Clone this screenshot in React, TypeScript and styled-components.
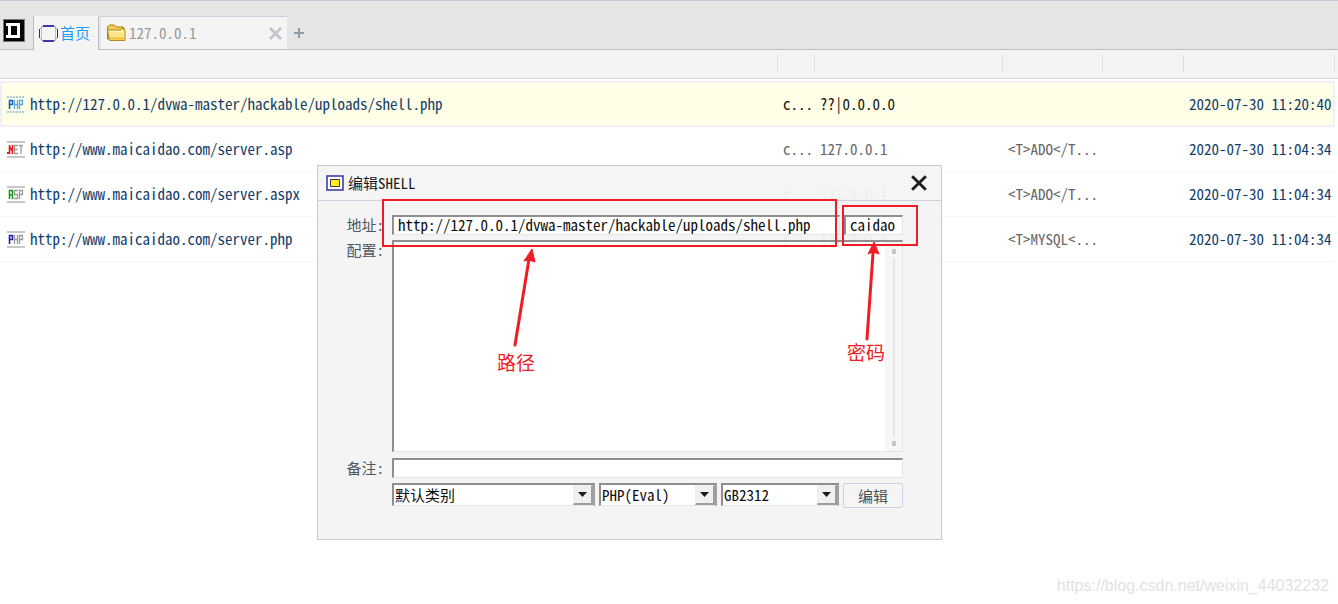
import React from 'react';
import styled, { createGlobalStyle, css } from 'styled-components';

const mono = '"Noto Sans Mono CJK SC", "Liberation Mono", "Noto Sans CJK SC", monospace';
const sans = '"Noto Sans CJK SC", "Liberation Sans", sans-serif';
const red = '#ee1c25';

const GlobalStyle = createGlobalStyle`
  * { box-sizing: border-box; }
  html, body, #root { height: 100%; }
  body {
    margin: 0;
    background: #fff;
    color: #222;
    font-family: ${mono};
    font-size: 15px;
    line-height: 20px;
  }
  button, input, select, textarea { font: inherit; color: inherit; }
`;

const Page = styled.div`
  position: relative;
  display: flex;
  flex-direction: column;
  min-height: 100%;
  overflow: hidden;
`;

const TabBar = styled.nav`
  display: flex;
  align-items: flex-end;
  height: 50px;
  background: #e5e5e5;
  border-top: 1px solid #c9c7d4;
  box-shadow: inset 0 -1px 0 #bebccb;
`;

const Logo = styled.div`
  align-self: flex-start;
  display: flex;
  width: 33px;
  padding: 18px 0 0 3px;
`;

const Tab = styled.button<{ $active?: boolean }>`
  display: flex;
  align-items: center;
  gap: ${p => (p.$active ? 2 : 3)}px;
  height: ${p => (p.$active ? 34 : 33)}px;
  padding: 0 5px;
  border: 0;
  background: #f4f4f4;
  text-align: left;
  white-space: nowrap;
  ${p =>
    p.$active
      ? css`
          padding-right: 8px;
          border-left: 1px solid #bebccb;
          border-right: 1px solid #bebccb;
          color: #1e9bff;
          font-family: ${sans};
          font-size: 15px;
        `
      : css`
          width: 186px;
          margin: 0 0 1px 2px;
          border-top: 1px solid #d0cfd9;
          color: #999;
        `}
`;

const TabName = styled.span`
  flex: 1;
`;

const AddTab = styled.button`
  align-self: flex-end;
  display: flex;
  padding: 0;
  margin: 0 0 11px 6px;
  border: 0;
  background: none;
`;

const ListTable = styled.table`
  width: 100%;
  table-layout: fixed;
  border-collapse: separate;
  border-spacing: 0;
`;

const HeadCell = styled.th`
  height: 29px;
  padding: 5px 0 6px;
  background: #f4f4f4;
  border-bottom: 1px solid #d5d5d8;
`;

const HeadRule = styled.div<{ $last?: boolean }>`
  height: 17px;
  border-right: ${p => (p.$last ? 0 : 1)}px solid #dedede;
`;

const Row = styled.tr<{ $selected?: boolean }>`
  td {
    height: ${p => (p.$selected ? 46 : 45)}px;
    padding: 0 0 0 5px;
    border-bottom: 1px solid #f7f7f9;
    color: ${p => (p.$selected ? '#111' : '#666')};
    white-space: nowrap;
    overflow: hidden;
  }
  td:first-child { padding-left: 7px; }
  td:last-child { padding: 0; border: 0; background: #fff; }
  ${p =>
    p.$selected &&
    css`
      td {
        background: #ffffe8;
        border-top: 2px solid #efeff8;
        border-bottom: 2px solid #efeff8;
      }
      td:first-child { border-left: 2px solid #efeff8; padding-left: 5px; }
      td:nth-last-child(2) { border-right: 2px solid #efeff8; }
    `}
  td:first-child, td:nth-last-child(2) { color: #123c69; }
`;

const Spacer = styled.tr`
  td { height: 2px; padding: 0; }
`;

const Site = styled.div`
  display: flex;
  align-items: center;
  gap: 5px;
`;

const Dialog = styled.section`
  position: absolute;
  left: 317px;
  top: 165px;
  width: 625px;
`;

const Frame = styled.div`
  height: 375px;
  border: 1px solid #c6c5d0;
  background: #f4f4f4;
  opacity: 0.95;
`;

const TitleBar = styled.header`
  display: flex;
  align-items: center;
  gap: 4px;
  height: 35px;
  padding: 0 14px 0 8px;
  border-bottom: 1px solid #cccbd6;
  background: #f5f5f5;
  color: #111;
`;

const Title = styled.h1`
  flex: 1;
  margin: 0;
  font: inherit;
`;

const IconButton = styled.button`
  display: flex;
  padding: 0;
  border: 0;
  background: none;
`;

const Form = styled.form`
  display: grid;
  grid-template-columns: 66px 511px;
  column-gap: 8px;
  row-gap: 5px;
  padding-top: 14px;
  color: #000;
`;

const Label = styled.label`
  color: #44505c;
  text-align: right;
  white-space: nowrap;
`;

const Line = styled.div`
  display: flex;
  gap: 4px;
`;

const sunken = css`
  border: 1px solid #e4e4e4;
  border-top: 2px solid #8a8a8a;
  border-left: 2px solid #8a8a8a;
  border-radius: 0;
  background: #fff;
  outline: 0;
`;

const Field = styled.input<{ $width?: number }>`
  ${sunken}
  width: ${p => (p.$width ? `${p.$width}px` : '100%')};
  height: 20px;
  padding: 0 4px 2px;
`;

const Memo = styled.div`
  ${sunken}
  display: flex;
  height: 212px;
  margin-bottom: 1px;
`;

const MemoText = styled.textarea`
  flex: 1;
  border: 0;
  padding: 2px 4px;
  background: none;
  resize: none;
  outline: 0;
`;

const Track = styled.div`
  display: flex;
  flex-direction: column;
  align-items: center;
  gap: 4px;
  width: 17px;
  padding: 7px 0 5px;
  background: repeating-conic-gradient(#f2f2f2 0 25%, #fafafa 0 50%) 0 0 / 2px 2px;

  &::before, &::after {
    content: '';
    width: 4px;
    height: 5px;
    background: #c4c4c4;
  }
`;

const TrackLine = styled.div`
  flex: 1;
  width: 2px;
  background: #e4e4e4;
`;

const Picker = styled.div<{ $width: number }>`
  ${sunken}
  position: relative;
  width: ${p => p.$width}px;
  height: 23px;
  border-right: 2px solid #9a9a9a;

  select {
    display: block;
    width: 100%;
    height: 20px;
    padding: 0 0 1px 1px;
    border: 0;
    outline: 0;
    background: none;
    appearance: none;
  }
`;

const Arrow = styled.span`
  position: absolute;
  top: 0;
  right: 0;
  display: flex;
  align-items: center;
  justify-content: center;
  width: 20px;
  height: 20px;
  border: 1px solid #eee;
  border-right: 2px solid #999;
  border-bottom: 2px solid #999;
  background: #f0f0f0;
  pointer-events: none;
`;

const Submit = styled.button`
  width: 60px;
  height: 25px;
  padding: 0;
  border: 1px solid #cfcfda;
  border-radius: 2px;
  background: #f5f5f5;
  color: #3c4650;
`;

const Marks = styled.svg`
  position: absolute;
  left: 0;
  top: 0;
  pointer-events: none;
`;

const Note = styled.span<{ $x: number; $y: number }>`
  position: absolute;
  left: ${p => p.$x}px;
  top: ${p => p.$y}px;
  color: ${red};
  font-family: ${sans};
  font-size: 19px;
`;

const Credit = styled.footer`
  margin-top: auto;
  padding: 0 9px 8px;
  color: #e2e2e2;
  font-family: "Liberation Sans", sans-serif;
  font-size: 16px;
  text-align: right;
`;

const LogoIcon = () => (
  <svg width="22" height="23" viewBox="0 0 22 23">
    <path d="M0 0h22v23H0z" fill="#777" />
    <path d="M1 1h20v21H1z" fill="#000" />
    <path d="M3 4h14v15H3v-3h2V7H3z" fill="#fff" />
    <path d="M8 7h6v9H8z" fill="#000" />
  </svg>
);

const HomeIcon = () => (
  <svg width="19" height="17" viewBox="0 0 19 17">
    <path d="M2.500 1.500h14v14h-14z" fill="none" stroke="#a8a8ac" strokeDasharray="2 1" />
    <path d="M4 1h11M4 16h11" stroke="#3a3aa4" strokeWidth="2" />
    <path d="M.5 4v9M18.500 4v9" stroke="#2a2a9c" />
    <path d="M1 4 4 1M15 1l3 3M1 13l3 3M18 13l-3 3" stroke="#9a9ac8" />
  </svg>
);

const FolderIcon = () => (
  <svg width="20" height="18" viewBox="0 0 20 18">
    <path d="M1.500 15V3l2-2h5l2 2h6.500l1.500 2v10z" fill="#f3cf58" stroke="#a77b12" />
    <path d="M3.500 16.500 1.500 6h13l1-1.500h2L19 7v9.500z" fill="#ffe688" stroke="#b58a1c" />
    <path d="M4 13.500h14v2H4.500z" fill="#f0bd35" />
    <path d="M3.500 7.500h13" stroke="#fff8cc" />
  </svg>
);

const glyphs: Record<string, string> = {
  P: 'M.5 9V.5h3v4h-3',
  H: 'M.5 0v9M3.500 0v9M.5 4.500h3',
  N: 'M.5 9V0M3.500 0v9M1 2l2 4',
  E: 'M4 .5H.5v8H4M.5 4.500h3',
  T: 'M0 .5h4M2 1v8',
  A: 'M.5 9V.5h3V9M.5 5h3',
  S: 'M4 .5H.5v4h3v4H0',
};

type Kind = { word: string; first: string; rest: string; line: string; dash?: boolean };

const kinds: Record<string, Kind> = {
  phpOn: { word: 'PHP', first: '#1462b8', rest: '#58a7dc', line: '#4b9bc8', dash: true },
  net: { word: 'NET', first: '#f01818', rest: '#999', line: '#c8c8c8' },
  asp: { word: 'ASP', first: '#1d971d', rest: '#999', line: '#c8c8c8' },
  php: { word: 'PHP', first: '#2020a0', rest: '#999', line: '#c8c8c8' },
};

const KindIcon = ({ kind }: { kind: Kind }) => (
  <svg width="18" height="17" viewBox="0 0 18 17">
    <path d="M0 1h18M0 16h18" stroke={kind.line} strokeWidth={kind.dash ? 1 : 2} strokeDasharray={kind.dash ? '2 1' : undefined} />
    {kind.word === 'NET' && <path d="M0 12h2" stroke={kind.first} strokeWidth="2" />}
    {kind.word.split('').map((letter, i) => (
      <path
        key={i}
        d={glyphs[letter]}
        transform={`translate(${2 + i * 5} 4)`}
        fill="none"
        stroke={i === 0 ? kind.first : kind.rest}
        strokeWidth={i === 0 ? 1.6 : 1.3}
      />
    ))}
  </svg>
);

const WindowIcon = () => (
  <svg width="18" height="16" viewBox="0 0 18 16">
    <path d="M1 1h16v14H1z" fill="#fff" stroke="#2929a3" strokeWidth="1.500" />
    <path d="M4.500 4.500h9v7h-9z" fill="#ffee00" stroke="#2b2b55" />
  </svg>
);

const Cross = ({ size, color, weight }: { size: number; color: string; weight: number }) => (
  <svg width={size} height={size} viewBox="0 0 14 14">
    <path d="M1 1l12 12M13 1L1 13" stroke={color} strokeWidth={weight} />
  </svg>
);

const rows = [
  { kind: 'phpOn', url: 'http://127.0.0.1/dvwa-master/hackable/uploads/shell.php', ip: '??|0.0.0.0', config: '', time: '2020-07-30 11:20:40' },
  { kind: 'net', url: 'http://www.maicaidao.com/server.asp', ip: '127.0.0.1', config: '<T>ADO</T...', time: '2020-07-30 11:04:34' },
  { kind: 'asp', url: 'http://www.maicaidao.com/server.aspx', ip: '127.0.0.1', config: '<T>ADO</T...', time: '2020-07-30 11:04:34' },
  { kind: 'php', url: 'http://www.maicaidao.com/server.php', ip: '127.0.0.1', config: '<T>MYSQL<...', time: '2020-07-30 11:04:34' },
];

const Select = ({ name, value, width }: { name: string; value: string; width: number }) => (
  <Picker $width={width}>
    <select aria-label={name} defaultValue={value}>
      <option>{value}</option>
    </select>
    <Arrow>
      <svg width="9" height="5" viewBox="0 0 9 5">
        <path d="M0 0h9L4.500 5z" fill="#111" />
      </svg>
    </Arrow>
  </Picker>
);

export default function App() {
  return (
    <Page>
      <GlobalStyle />
      <TabBar>
        <Logo><LogoIcon /></Logo>
        <Tab $active><HomeIcon />首页</Tab>
        <Tab>
          <FolderIcon />
          <TabName>127.0.0.1</TabName>
          <Cross size={13} color="#c3c2ce" weight={3} />
        </Tab>
        <AddTab aria-label="+">
          <svg width="12" height="12" viewBox="0 0 12 12">
            <path d="M6 1v10M1 6h10" stroke="#8b9ca6" strokeWidth="2" />
          </svg>
        </AddTab>
      </TabBar>

      <ListTable>
        <colgroup>
          <col />
          <col style={{ width: 37 }} />
          <col style={{ width: 188 }} />
          <col style={{ width: 100 }} />
          <col style={{ width: 81 }} />
          <col style={{ width: 151 }} />
          <col style={{ width: 3 }} />
        </colgroup>
        <thead>
          <tr>
            {[0, 1, 2, 3, 4, 5, 6].map(i => (
              <HeadCell key={i}><HeadRule $last={i === 6} /></HeadCell>
            ))}
          </tr>
        </thead>
        <tbody>
          <Spacer><td colSpan={7} /></Spacer>
          {rows.map((row, i) => (
            <Row key={row.kind} $selected={i === 0}>
              <td><Site><KindIcon kind={kinds[row.kind]} />{row.url}</Site></td>
              <td>c...</td>
              <td>{row.ip}</td>
              <td>{row.config}</td>
              <td />
              <td>{row.time}</td>
              <td />
            </Row>
          ))}
        </tbody>
      </ListTable>

      <Dialog role="dialog" aria-labelledby="title">
        <Frame>
          <TitleBar>
            <WindowIcon />
            <Title id="title">编辑SHELL</Title>
            <IconButton aria-label="×"><Cross size={16} color="#111" weight={2.5} /></IconButton>
          </TitleBar>
          <Form onSubmit={e => e.preventDefault()}>
            <Label htmlFor="address">地址:</Label>
            <Line>
              <Field id="address" $width={448} defaultValue="http://127.0.0.1/dvwa-master/hackable/uploads/shell.php" />
              <Field aria-label="密码" $width={59} defaultValue="caidao" />
            </Line>
            <Label htmlFor="config">配置:</Label>
            <Memo>
              <MemoText id="config" />
              <Track><TrackLine /></Track>
            </Memo>
            <Label htmlFor="remark">备注:</Label>
            <Field id="remark" />
            <span />
            <Line>
              <Select name="类别" value="默认类别" width={203} />
              <Select name="类型" value="PHP(Eval)" width={118} />
              <Select name="编码" value="GB2312" width={118} />
              <Submit>编辑</Submit>
            </Line>
          </Form>
        </Frame>
        <Marks width="625" height="375" viewBox="0 0 625 375" fill="none" stroke={red}>
          <path d="M66 35h453v46H66zM526 41h74v39h-74z" strokeWidth="2" />
          <path d="M198 180 212 94M550 174 556 88" strokeWidth="3" strokeLinecap="round" />
          <path d="M215 84 218 97 212 95 207 96zM557 77 562 89 556 87 551 89z" fill={red} stroke={red} strokeWidth="1" />
        </Marks>
        <Note $x={180} $y={187}>路径</Note>
        <Note $x={530} $y={177}>密码</Note>
      </Dialog>

      <Credit>https://blog.csdn.net/weixin_44032232</Credit>
    </Page>
  );
}
